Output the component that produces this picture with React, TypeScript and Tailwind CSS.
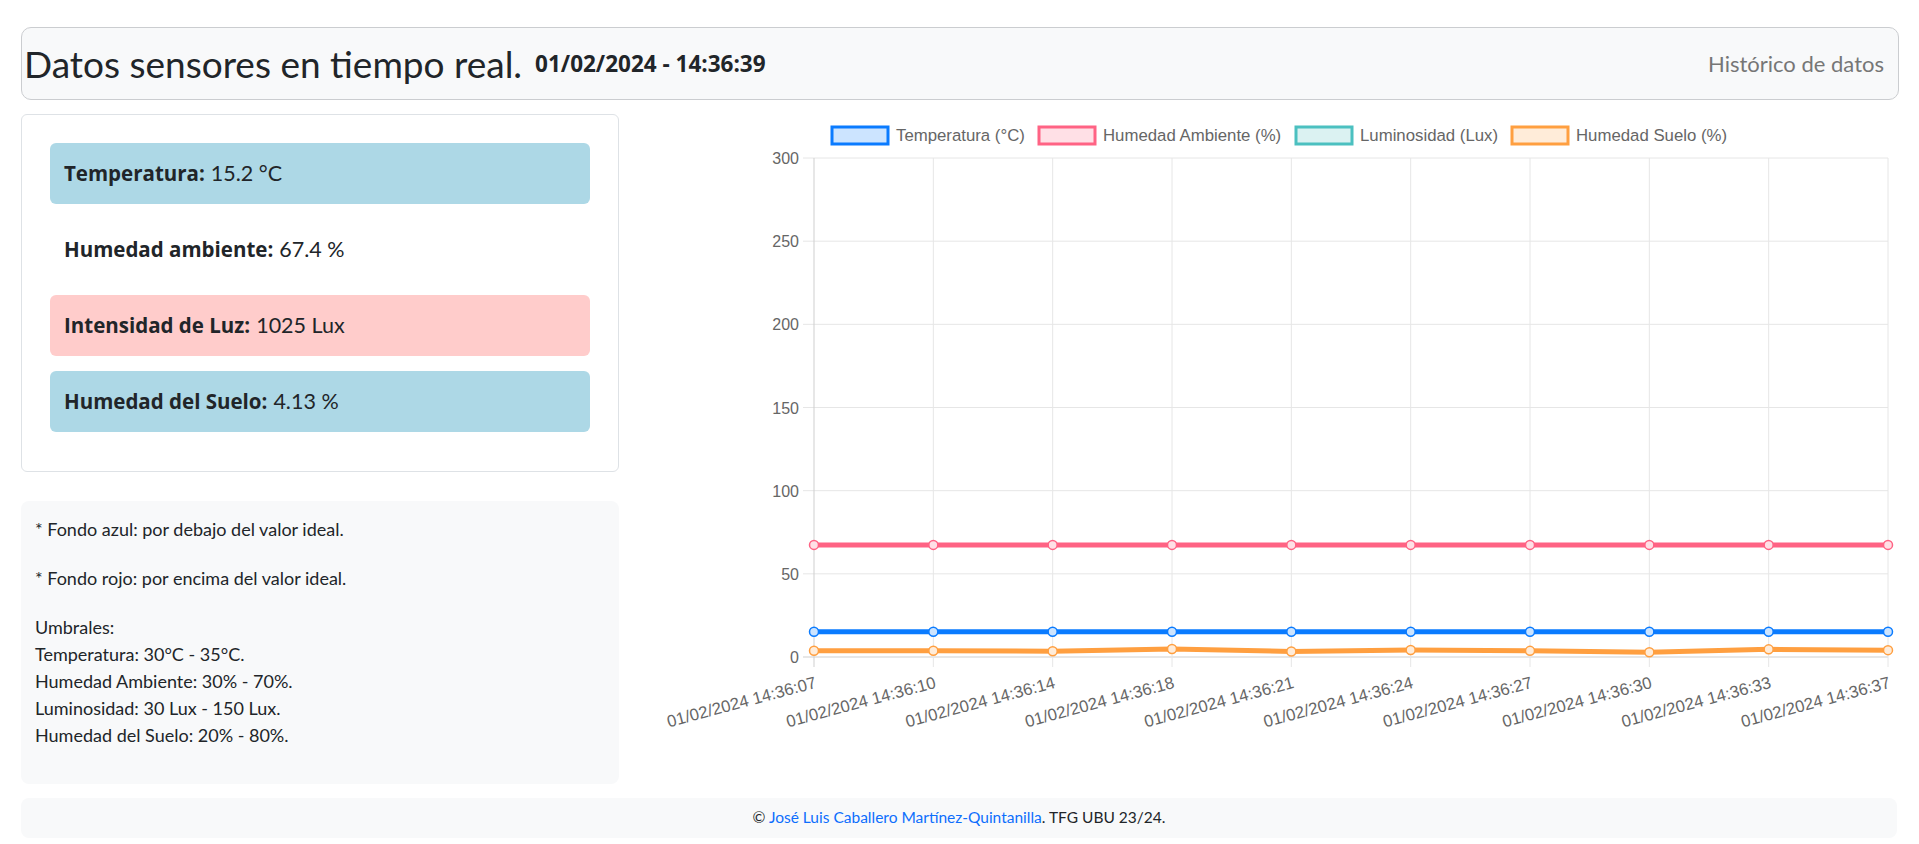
import React from 'react';

type Reading = {
  label: string;
  value: string;
  tone: 'low' | 'high' | 'ok';
};

const readings: Reading[] = [
  { label: 'Temperatura:', value: '15.2 °C', tone: 'low' },
  { label: 'Humedad ambiente:', value: '67.4 %', tone: 'ok' },
  { label: 'Intensidad de Luz:', value: '1025 Lux', tone: 'high' },
  { label: 'Humedad del Suelo:', value: '4.13 %', tone: 'low' },
];

const toneClass: Record<Reading['tone'], string> = {
  low: 'bg-[#add8e6]',
  high: 'bg-[#ffcccb]',
  ok: 'bg-transparent',
};

// chart geometry, in page pixels (svg viewBox starts at 649,114)
const plotLeft = 814;
const plotRight = 1888;
const plotTop = 158;
const plotBottom = 657;
const yMax = 300;
const times = ['07', '10', '14', '18', '21', '24', '27', '30', '33', '37'];
const xAt = (i: number) => plotLeft + (i * (plotRight - plotLeft)) / (times.length - 1);
const yAt = (v: number) => plotBottom - (v * (plotBottom - plotTop)) / yMax;

const series = [
  { name: 'Humedad Ambiente (%)', color: '#ff6384', fill: '#ffe0e6', data: times.map(() => 67.4) },
  { name: 'Temperatura (°C)', color: '#0a7bff', fill: '#cce4ff', data: times.map(() => 15.2) },
  { name: 'Humedad Suelo (%)', color: '#ff9f40', fill: '#ffecd9', data: [3.8, 3.8, 3.5, 4.8, 3.3, 4.2, 3.7, 2.9, 4.6, 4.13] },
];

const legend = [
  { name: 'Temperatura (°C)', color: '#0a7bff', fill: '#cce4ff', x: 832 },
  { name: 'Humedad Ambiente (%)', color: '#ff6384', fill: '#ffe0e6', x: 1039 },
  { name: 'Luminosidad (Lux)', color: '#4bc0c0', fill: '#dbf2f2', x: 1296 },
  { name: 'Humedad Suelo (%)', color: '#ff9f40', fill: '#ffecd9', x: 1512 },
];

function SensorChart() {
  const ticks = [0, 50, 100, 150, 200, 250, 300];

  return (
    <svg width={1250} height={670} viewBox="649 114 1250 670" className="block">
      <g fontFamily="'Liberation Sans', Arial, sans-serif" fontSize={16} fill="#666">
        {legend.map((item) => (
          <g key={item.name}>
            <rect x={item.x} y={127} width={56} height={17} fill={item.fill} stroke={item.color} strokeWidth={3} />
            <text x={item.x + 64} y={141} fontSize={16.8}>
              {item.name}
            </text>
          </g>
        ))}

        {ticks.map((t) => (
          <g key={t}>
            <line
              x1={803}
              x2={plotRight}
              y1={yAt(t)}
              y2={yAt(t)}
              stroke={t === 0 ? '#cfcfcf' : '#e6e6e6'}
              strokeWidth={1}
            />
            <text x={799} y={yAt(t) + 6} textAnchor="end">
              {t}
            </text>
          </g>
        ))}

        {times.map((t, i) => (
          <g key={t}>
            <line
              x1={xAt(i)}
              x2={xAt(i)}
              y1={plotTop}
              y2={plotBottom + 10}
              stroke={i === 0 ? '#cfcfcf' : '#e6e6e6'}
              strokeWidth={1}
            />
            <text
              x={xAt(i)}
              y={688}
              fontSize={16.8}
              textAnchor="end"
              transform={`rotate(-15 ${xAt(i)} 675)`}
            >
              01/02/2024 14:36:{t}
            </text>
          </g>
        ))}
      </g>

      {series.map((s) => (
        <g key={s.name}>
          <polyline
            points={s.data.map((v, i) => `${xAt(i)},${yAt(v)}`).join(' ')}
            fill="none"
            stroke={s.color}
            strokeWidth={5}
            strokeLinejoin="round"
          />
          {s.data.map((v, i) => (
            <circle key={i} cx={xAt(i)} cy={yAt(v)} r={4.5} fill={s.fill} stroke={s.color} strokeWidth={1.5} />
          ))}
        </g>
      ))}
    </svg>
  );
}

export default function App() {
  return (
    <div className="min-h-[844px] w-full bg-white pl-[21px] pr-[20px] pt-[27px] font-['Lato',sans-serif] text-[#212529]">
      <div className="flex h-[73px] items-center rounded-[10px] border border-[#cbcdd0] bg-[#f8f9fa] pl-[2px] pr-[14px]">
        <h1 className="text-[37px] leading-none">Datos sensores en tiempo real.</h1>
        <span className="ml-[13px] font-['Open_Sans',sans-serif] text-[22.5px] font-bold">01/02/2024 - 14:36:39</span>
        <span className="ml-auto text-[22px] text-[#767676]">Histórico de datos</span>
      </div>

      <div className="mt-[14px] flex gap-[30px]">
        <div className="flex w-[598px] flex-col gap-[29px]">
          <div className="flex flex-col gap-[15px] rounded-[6px] border border-[#dee2e6] px-[28px] pb-[39px] pt-[28px]">
            {readings.map((r) => (
              <div key={r.label} className={`flex h-[61px] items-center rounded-[6px] pl-[14px] ${toneClass[r.tone]}`}>
                <span className="font-['Open_Sans',sans-serif] text-[20.5px] font-bold">{r.label}</span>
                <span className="ml-[6px] text-[21.5px]">{r.value}</span>
              </div>
            ))}
          </div>

          <div className="h-[283px] rounded-[8px] bg-[#f8f9fa] px-[14px] pt-[15px] text-[18px] leading-[27px]">
            <p className="mb-[22px]">* Fondo azul: por debajo del valor ideal.</p>
            <p className="mb-[22px]">* Fondo rojo: por encima del valor ideal.</p>
            <p>
              Umbrales:
              <br />
              Temperatura: 30°C - 35°C.
              <br />
              Humedad Ambiente: 30% - 70%.
              <br />
              Luminosidad: 30 Lux - 150 Lux.
              <br />
              Humedad del Suelo: 20% - 80%.
            </p>
          </div>
        </div>

        <div className="flex-1">
          <SensorChart />
        </div>
      </div>

      <footer className="mr-[2px] mt-[14px] flex h-[40px] items-center justify-center rounded-[8px] bg-[#f8f9fa] text-[15.5px]">
        <span>
          © <a className="text-[#0d6efd]">José Luis Caballero Martínez-Quintanilla</a>. TFG UBU 23/24.
        </span>
      </footer>
    </div>
  );
}
